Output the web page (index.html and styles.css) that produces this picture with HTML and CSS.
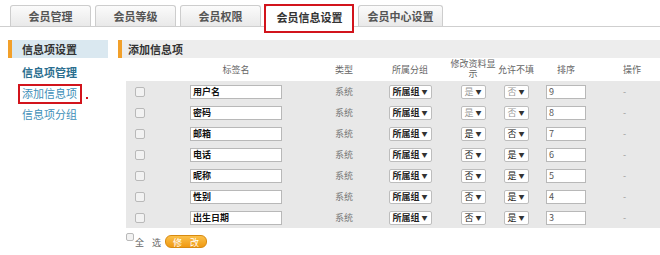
FILE: index.html
```html
<!DOCTYPE html>
<html lang="zh-CN">
<head>
<meta charset="utf-8">
<title>会员信息设置</title>
<link rel="stylesheet" href="styles.css">
</head>
<body>
<div class="page">
  <div class="tabs">
    <span class="tab">会员管理</span>
    <span class="tab">会员等级</span>
    <span class="tab">会员权限</span>
    <span class="tab tab-active">会员信息设置<span class="mark mark-tab"></span></span>
    <span class="tab tab-wide">会员中心设置</span>
  </div>
  <div class="layout">
    <aside class="sidebar">
      <div class="side-head">信息项设置</div>
      <a class="side-link side-strong">信息项管理</a>
      <a class="side-link side-current">添加信息项<span class="mark mark-link"></span><span class="dot"></span></a>
      <a class="side-link">信息项分组</a>
    </aside>
    <main class="main">
      <div class="main-head">添加信息项</div>
      <table class="grid">
        <colgroup>
          <col class="c-check"><col class="c-label"><col class="c-type"><col class="c-group"><col class="c-show"><col class="c-empty"><col class="c-order"><col class="c-op">
        </colgroup>
        <thead>
          <tr>
            <th></th><th>标签名</th><th>类型</th><th>所属分组</th><th class="th-wrap"><span class="wrap-text">修改资料显示</span></th><th>允许不填</th><th>排序</th><th class="op">操作</th>
          </tr>
        </thead>
        <tbody>
          <tr><td><span class="cb"></span></td><td><span class="txt txt-name">用户名</span></td><td class="sys">系统</td><td><span class="sel sel-group">所属组<i>▼</i></span></td><td><span class="sel sel-yn dim">是<i>▼</i></span></td><td><span class="sel sel-yn dim">否<i>▼</i></span></td><td><span class="txt txt-order">9</span></td><td class="op">-</td></tr>
          <tr><td><span class="cb"></span></td><td><span class="txt txt-name">密码</span></td><td class="sys">系统</td><td><span class="sel sel-group">所属组<i>▼</i></span></td><td><span class="sel sel-yn dim">是<i>▼</i></span></td><td><span class="sel sel-yn dim">否<i>▼</i></span></td><td><span class="txt txt-order">8</span></td><td class="op">-</td></tr>
          <tr><td><span class="cb"></span></td><td><span class="txt txt-name">邮箱</span></td><td class="sys">系统</td><td><span class="sel sel-group">所属组<i>▼</i></span></td><td><span class="sel sel-yn">是<i>▼</i></span></td><td><span class="sel sel-yn">否<i>▼</i></span></td><td><span class="txt txt-order">7</span></td><td class="op">-</td></tr>
          <tr><td><span class="cb"></span></td><td><span class="txt txt-name">电话</span></td><td class="sys">系统</td><td><span class="sel sel-group">所属组<i>▼</i></span></td><td><span class="sel sel-yn">否<i>▼</i></span></td><td><span class="sel sel-yn">是<i>▼</i></span></td><td><span class="txt txt-order">6</span></td><td class="op">-</td></tr>
          <tr><td><span class="cb"></span></td><td><span class="txt txt-name">昵称</span></td><td class="sys">系统</td><td><span class="sel sel-group">所属组<i>▼</i></span></td><td><span class="sel sel-yn">否<i>▼</i></span></td><td><span class="sel sel-yn">是<i>▼</i></span></td><td><span class="txt txt-order">5</span></td><td class="op">-</td></tr>
          <tr><td><span class="cb"></span></td><td><span class="txt txt-name">性别</span></td><td class="sys">系统</td><td><span class="sel sel-group">所属组<i>▼</i></span></td><td><span class="sel sel-yn">否<i>▼</i></span></td><td><span class="sel sel-yn">是<i>▼</i></span></td><td><span class="txt txt-order">4</span></td><td class="op">-</td></tr>
          <tr><td><span class="cb"></span></td><td><span class="txt txt-name">出生日期</span></td><td class="sys">系统</td><td><span class="sel sel-group">所属组<i>▼</i></span></td><td><span class="sel sel-yn">否<i>▼</i></span></td><td><span class="sel sel-yn">是<i>▼</i></span></td><td><span class="txt txt-order">3</span></td><td class="op">-</td></tr>
        </tbody>
      </table>
      <div class="actions">
        <span class="cb cb-all"></span><span class="all-label">全 选</span><span class="btn">修 改</span>
      </div>
    </main>
  </div>
</div>
</body>
</html>
```
FILE: styles.css
```css
html, body {
  margin: 0;
  padding: 0;
  background: #fff;
}
body {
  font-family: "Noto Sans CJK SC", "Liberation Sans", sans-serif;
  color: #333;
  width: 660px;
  height: 255px;
  overflow: hidden;
}
.page {
  width: 660px;
}

/* tabs */
.tabs {
  display: flex;
  gap: 4px;
  padding: 5px 0 0 10px;
  border-bottom: 1px solid #cfcfcf;
  height: 21px;
}
.tab {
  position: relative;
  width: 79px;
  height: 20px;
  box-sizing: content-box;
  border: 1px solid #cdcdcd;
  border-bottom: none;
  border-radius: 3px 3px 0 0;
  background: linear-gradient(#fbfbfb, #e9e9e9);
  font-size: 11px;
  font-weight: bold;
  color: #555;
  display: flex;
  align-items: center;
  justify-content: center;
}
.tab-active {
  width: 87px;
  background: #fff;
  height: 21px;
  margin-bottom: -1px;
  color: #333;
}
.tab-wide {
  width: 83px;
}

/* annotation marks */
.mark {
  position: absolute;
  border: 2px solid #d2141c;
  pointer-events: none;
}
.mark-tab {
  left: -2px;
  top: -2px;
  width: 86px;
  height: 25px;
}
.dot {
  position: absolute;
  left: 78px;
  top: 14px;
  width: 2px;
  height: 2px;
  background: #d2141c;
}

/* layout */
.layout {
  display: flex;
  margin-top: 13px;
  padding-left: 8px;
}
.sidebar {
  width: 100px;
  flex: none;
}
.side-head {
  height: 18px;
  line-height: 18px;
  background: #dae8f0;
  border-left: 4px solid #f2a02a;
  padding-left: 10px;
  font-size: 11px;
  font-weight: bold;
  color: #333;
}
.side-link {
  position: relative;
  display: block;
  height: 21px;
  line-height: 21px;
  padding-left: 14px;
  font-size: 11px;
  color: #3d8fb8;
  cursor: pointer;
}
.side-link:first-of-type {
  margin-top: 4px;
}
.side-strong {
  font-weight: bold;
  color: #2a6e8f;
}
.mark-link {
  left: 10px;
  top: 1px;
  width: 60px;
  height: 16px;
}

.main {
  flex: 1;
  margin-left: 10px;
}
.main-head {
  height: 18px;
  line-height: 18px;
  background: #ededed;
  border-left: 4px solid #f2a02a;
  padding-left: 6px;
  font-size: 11px;
  font-weight: bold;
  color: #333;
}

/* table */
.grid {
  margin-left: 8px;
  width: 534px;
  table-layout: fixed;
  border-collapse: collapse;
  font-size: 9px;
}
.c-check { width: 24px; }
.c-label { width: 172px; }
.c-type { width: 44px; }
.c-group { width: 88px; }
.c-show { width: 38px; }
.c-empty { width: 48px; }
.c-order { width: 52px; }
.c-op { width: 68px; }

.grid th {
  height: 22px;
  padding: 0;
  font-weight: normal;
  color: #666;
  text-align: center;
  vertical-align: middle;
  line-height: 10px;
}
.grid th.th-wrap {
  vertical-align: top;
  padding-top: 1px;
}
.wrap-text {
  display: block;
  width: 46px;
  margin-left: -4px;
}
.grid th.op, .grid td.op {
  text-align: left;
  padding-left: 31px;
}
.grid tbody tr {
  background: #e8e8e8;
}
.grid td {
  height: 21px;
  padding: 0;
  text-align: center;
  vertical-align: middle;
  line-height: 14px;
}
.grid td.sys {
  color: #777;
}
.grid td.op {
  color: #999;
}

.cb {
  display: inline-block;
  width: 8px;
  height: 8px;
  border: 1px solid #b9b9b9;
  border-radius: 2px;
  background: #f2f2f2;
  vertical-align: middle;
}
.grid td:first-child .cb {
  margin-left: 4px;
}

.txt {
  display: inline-block;
  box-sizing: border-box;
  height: 14px;
  line-height: 12px;
  border: 1px solid #b8b8b8;
  background: #fff;
  text-align: left;
  padding-left: 2px;
  color: #111;
  vertical-align: middle;
}
.txt-name {
  width: 92px;
  font-weight: bold;
}
.txt-order {
  width: 40px;
  color: #555;
}

.sel {
  display: inline-flex;
  box-sizing: border-box;
  align-items: center;
  justify-content: space-between;
  height: 14px;
  border: 1px solid #bdbdbd;
  border-radius: 2px;
  background: #fff;
  padding: 0 3px 0 3px;
  color: #222;
  vertical-align: middle;
}
.sel i {
  font-style: normal;
  font-size: 6px;
  color: #333;
}
.sel-group {
  width: 43px;
  font-weight: bold;
}
.sel-yn {
  width: 25px;
}
.sel.dim {
  color: #999;
}

/* actions */
.actions {
  display: flex;
  align-items: center;
  margin-top: 5px;
  margin-left: 8px;
  height: 14px;
  font-size: 9px;
  color: #666;
}
.cb-all {
  align-self: flex-start;
  width: 6px;
  height: 6px;
}
.all-label {
  margin-left: 1px;
  margin-top: 4px;
  letter-spacing: 3px;
  white-space: pre;
}
.btn {
  margin-left: 1px;
  margin-top: 2px;
  width: 42px;
  height: 13px;
  line-height: 13px;
  border-radius: 6px;
  background: linear-gradient(#fbc04a, #f09a12);
  border: 1px solid #d88a10;
  box-sizing: border-box;
  color: #fff;
  text-align: center;
  font-size: 9px;
  letter-spacing: 3px;
  text-indent: 3px;
}
```
